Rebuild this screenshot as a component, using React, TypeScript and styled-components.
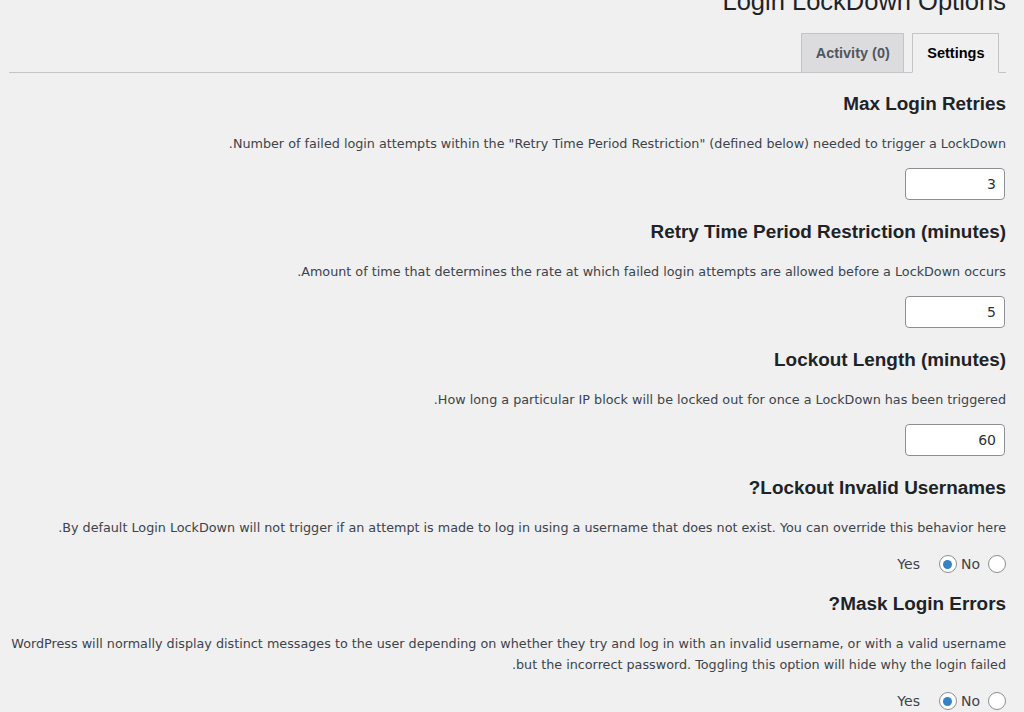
import styled, { createGlobalStyle } from 'styled-components'

const GlobalStyle = createGlobalStyle`
  html, body {
    margin: 0;
    padding: 0;
    background: #f0f0f1;
    overflow: hidden;
  }
  body {
    font-family: "DejaVu Sans", Verdana, sans-serif;
    color: #3c434a;
  }
`

const Wrap = styled.div`
  height: 712px;
  padding: 0 18px 0 5px;
  overflow: hidden;
`

const Title = styled.h1`
  margin: -15px 0 0;
  font-family: "Liberation Sans", Arial, sans-serif;
  font-size: 25.5px;
  font-weight: 400;
  line-height: 32px;
  color: #1d2327;
  text-align: right;
`

const TabBar = styled.nav`
  display: flex;
  justify-content: flex-end;
  gap: 8px;
  margin: 16px 0 0 4px;
  padding-right: 7px;
  border-bottom: 1px solid #c3c4c7;
`

const Tab = styled.a<{ $active?: boolean }>`
  display: block;
  box-sizing: border-box;
  height: 40px;
  margin-bottom: -1px;
  padding: 0 13.5px 0 14px;
  font-family: "Liberation Sans", Arial, sans-serif;
  font-size: 14.5px;
  font-weight: 700;
  line-height: 38px;
  border: 1px solid #c3c4c7;
  border-bottom-color: ${p => (p.$active ? '#f0f0f1' : '#c3c4c7')};
  background: ${p => (p.$active ? '#f0f0f1' : '#dcdcde')};
  color: ${p => (p.$active ? '#000' : '#50575e')};
`

const Section = styled.section`
  display: flex;
  flex-direction: column;
  align-items: flex-end;
`

const Heading = styled.h2`
  margin: 19px 0 0;
  font-family: "Liberation Sans", Arial, sans-serif;
  font-size: 18.9px;
  font-weight: 700;
  line-height: 24px;
  color: #1d2327;
  direction: rtl;
`

const Desc = styled.p`
  margin: 17px 0 0;
  font-size: 12.75px;
  line-height: 21px;
  direction: rtl;
  text-align: right;
`

const NumberInput = styled.input`
  box-sizing: border-box;
  width: 100px;
  height: 32px;
  margin: 14px 1px 1px 0;
  padding: 0 8px;
  border: 1px solid #8c8f94;
  border-radius: 4px;
  background: #fff;
  font-family: inherit;
  font-size: 14px;
  color: #2c3338;
  text-align: right;
  outline: none;
`

const RadioRow = styled.div`
  display: flex;
  align-items: center;
  height: 20px;
  margin: 16px 0 -1px;
  font-size: 14px;
`

const RadioLabel = styled.span<{ $gap: number }>`
  margin-right: ${p => p.$gap}px;
`

const Radio = styled.span<{ $checked?: boolean; $gap: number }>`
  box-sizing: border-box;
  display: inline-flex;
  align-items: center;
  justify-content: center;
  width: 18px;
  height: 18px;
  margin-right: ${p => p.$gap}px;
  border: 1px solid #8c8f94;
  border-radius: 50%;
  background: #fff;
  &::before {
    content: '';
    display: ${p => (p.$checked ? 'block' : 'none')};
    width: 9px;
    height: 9px;
    border-radius: 50%;
    background: #3582c4;
  }
`

const numberFields = [
  {
    title: 'Max Login Retries',
    desc: 'Number of failed login attempts within the "Retry Time Period Restriction" (defined below) needed to trigger a LockDown.',
    value: '3',
  },
  {
    title: 'Retry Time Period Restriction (minutes)',
    desc: 'Amount of time that determines the rate at which failed login attempts are allowed before a LockDown occurs.',
    value: '5',
  },
  {
    title: 'Lockout Length (minutes)',
    desc: 'How long a particular IP block will be locked out for once a LockDown has been triggered.',
    value: '60',
  },
]

const toggleFields = [
  {
    title: 'Lockout Invalid Usernames?',
    desc: 'By default Login LockDown will not trigger if an attempt is made to log in using a username that does not exist. You can override this behavior here.',
  },
  {
    title: 'Mask Login Errors?',
    desc: 'WordPress will normally display distinct messages to the user depending on whether they try and log in with an invalid username, or with a valid username but the incorrect password. Toggling this option will hide why the login failed.',
  },
]

function YesNo() {
  return (
    <RadioRow>
      <RadioLabel $gap={19}>Yes</RadioLabel>
      <Radio $checked $gap={4} />
      <RadioLabel $gap={8}>No</RadioLabel>
      <Radio $gap={0} />
    </RadioRow>
  )
}

export default function App() {
  return (
    <>
      <GlobalStyle />
      <Wrap>
        <Title>Login LockDown Options</Title>
        <TabBar>
          <Tab>Activity (0)</Tab>
          <Tab $active>Settings</Tab>
        </TabBar>
        {numberFields.map(f => (
          <Section key={f.title}>
            <Heading>{f.title}</Heading>
            <Desc>{f.desc}</Desc>
            <NumberInput type="text" defaultValue={f.value} />
          </Section>
        ))}
        {toggleFields.map(f => (
          <Section key={f.title}>
            <Heading>{f.title}</Heading>
            <Desc>{f.desc}</Desc>
            <YesNo />
          </Section>
        ))}
      </Wrap>
    </>
  )
}
